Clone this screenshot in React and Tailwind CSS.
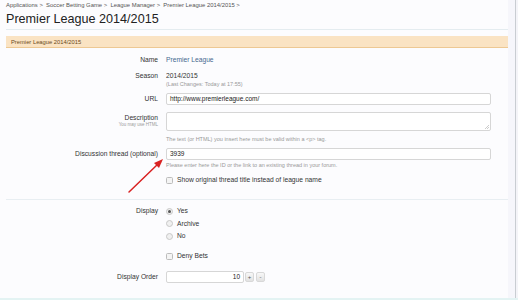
import React from 'react';

function Radio({ checked, label }) {
    return (
        <div className="flex items-center h-[12.5px]">
            <span className="w-[7px] h-[7px] rounded-full border border-[#c8c8c8] bg-[#f0f0f0] flex items-center justify-center">
                {checked && <span className="w-[3px] h-[3px] rounded-full bg-[#555]" />}
            </span>
            <span className="ml-[4px] text-[6.7px] text-[#333]">{label}</span>
        </div>
    );
}

function Checkbox({ label }) {
    return (
        <div className="flex items-center h-[10px]">
            <span className="w-[7px] h-[7px] rounded-[1.5px] border border-[#bcbcbc] bg-[#f4f4f4]" />
            <span className="ml-[4px] text-[6.7px] text-[#333]">{label}</span>
        </div>
    );
}

function Row({ label, sub, children, className = '' }) {
    return (
        <div className={`flex ${className}`}>
            <div className="w-[152px] shrink-0 text-right">
                <div className="text-[6.7px] text-[#333] leading-[12px]">{label}</div>
                {sub && <div className="text-[4.5px] text-[#999] leading-[5px] -mt-[2px]">{sub}</div>}
            </div>
            <div className="ml-[8px] flex-1">{children}</div>
        </div>
    );
}

export default function App() {
    return (
        <div className="relative w-[518px] h-[300px] overflow-hidden bg-[#fcfcfe] flex" style={{ fontFamily: '"Liberation Sans", Arial, sans-serif' }}>
            <div className="w-[508px] shrink-0 pl-[6px]">
                {/* breadcrumb */}
                <div className="h-[10px] pt-[2px] text-[5.9px] text-[#555] leading-[7px] whitespace-nowrap">
                    Applications &gt;&nbsp; Soccer Betting Game &gt;&nbsp; League Manager &gt;&nbsp; Premier League 2014/2015 &gt;
                </div>
                <h1 className="h-[20px] text-[12.6px] leading-[18px] text-[#222] border-b border-[#e4ecf0]">
                    Premier League 2014/2015
                </h1>
                <div className="mt-[6px] h-[12px] bg-[#fae3c3] border-b border-[#edc893] text-[5.8px] leading-[12px] text-[#6b4a22] pl-[5px]">
                    Premier League 2014/2015
                </div>

                <div className="pr-[17px]">
                    <Row label="Name" className="pt-[6px]">
                        <div className="text-[6.7px] leading-[12px] text-[#47698f]">Premier League</div>
                    </Row>
                    <Row label="Season" className="mt-[4px]">
                        <div className="text-[6.7px] leading-[12px] text-[#333]">2014/2015</div>
                        <div className="text-[5.5px] leading-[7px] text-[#999] -mt-[1px]">(Last Changes: Today at 17:55)</div>
                    </Row>
                    <Row label="URL" className="mt-[5px]">
                        <div className="h-[12px] border border-[#d6d6d6] rounded-[2px] bg-white text-[6.5px] leading-[10px] pl-[3px] text-[#222]">
                            http://www.premierleague.com/
                        </div>
                    </Row>
                    <Row label="Description" sub="You may use HTML" className="mt-[7px]">
                        <div className="relative h-[19px] border border-[#d6d6d6] rounded-[2px] bg-white">
                            <svg className="absolute right-[1px] bottom-[1px]" width="4" height="4" viewBox="0 0 4 4">
                                <path d="M4 0 L0 4 M4 2 L2 4" stroke="#aaa" strokeWidth="0.6" />
                            </svg>
                        </div>
                        <div className="mt-[4px] text-[5.5px] leading-[8px] text-[#999]">
                            The text (or HTML) you insert here must be valid within a &lt;p&gt; tag.
                        </div>
                    </Row>
                    <Row label="Discussion thread (optional)" className="mt-[5px]">
                        <div className="h-[12px] border border-[#d6d6d6] rounded-[2px] bg-white text-[6.5px] leading-[10px] pl-[3px] text-[#222]">
                            3939
                        </div>
                        <div className="mt-[1px] text-[5.5px] leading-[8px] text-[#999]">
                            Please enter here the ID or the link to an existing thread in your forum.
                        </div>
                        <div className="mt-[6px]">
                            <Checkbox label="Show original thread title instead of league name" />
                        </div>
                    </Row>
                    <div className="mt-[14px] border-t border-[#e8eef2] mr-[-17px]" />
                    <Row label="Display" className="mt-[5px]">
                        <Radio checked label="Yes" />
                        <Radio label="Archive" />
                        <Radio label="No" />
                        <div className="mt-[9px]">
                            <Checkbox label="Deny Bets" />
                        </div>
                    </Row>
                    <Row label="Display Order" className="mt-[9px]">
                        <div className="flex items-center">
                            <div className="w-[78px] h-[12px] border border-[#d6d6d6] rounded-[2px] bg-white text-[6.5px] leading-[10px] pr-[3px] text-right text-[#222]">
                                10
                            </div>
                            <button className="ml-[1px] w-[9px] h-[10px] rounded-[2px] border border-[#d8d8d8] bg-gradient-to-b from-[#f8f8f8] to-[#e2e2e2] text-[6px] leading-[8px] text-[#555]">+</button>
                            <button className="ml-[2px] w-[9px] h-[10px] rounded-[2px] border border-[#d8d8d8] bg-gradient-to-b from-[#f8f8f8] to-[#e2e2e2] text-[6px] leading-[8px] text-[#555]">-</button>
                        </div>
                    </Row>
                </div>
            </div>
            <div className="w-[7px] bg-[#f6f6fb]" />
            <div className="w-[1px] bg-[#c9cdd2]" />
            <div className="flex-1 bg-[#f4f4f8]" />

            <div className="absolute left-0 right-0 bottom-0 h-[2px] bg-[#e3f3f3]" />

            {/* red annotation arrow */}
            <svg className="absolute left-0 top-0 pointer-events-none" width="518" height="300">
                <line x1="129" y1="192" x2="158" y2="164" stroke="#d92222" strokeWidth="1.5" strokeLinecap="round" />
                <path d="M163 159 L154 163 L159 168 Z" fill="#d92222" />
            </svg>
        </div>
    );
}
